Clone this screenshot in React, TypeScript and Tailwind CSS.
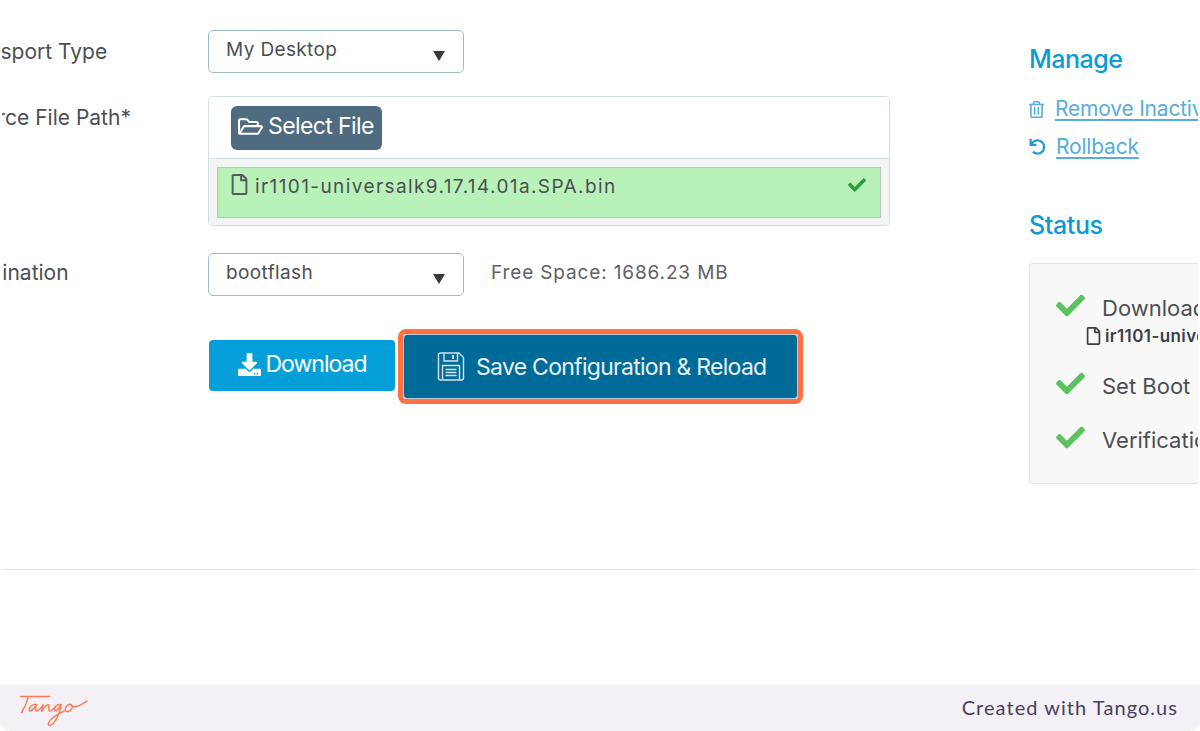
import React from "react";
import { FaRegFolderOpen, FaDownload, FaCheck, FaRegFile, FaRegTrashAlt, FaUndo } from "react-icons/fa";

function FakeSelect({ value }: { value: string }) {
  return (
    <div className="flex h-[43px] w-[256px] items-start justify-between rounded-[5px] border border-[#9dbccd] bg-white pl-[17px] pr-[18px]">
      <span className="mt-[7px] text-[19px] leading-[24px] tracking-[0.37px] text-[#4b4f54]">{value}</span>
      <span className="mt-[20px] h-0 w-0 border-x-[6.5px] border-t-[10px] border-x-transparent border-t-[#39393b]" />
    </div>
  );
}

function StatusRow({ label, className }: { label: string; className: string }) {
  return (
    <div className={`flex items-start ${className}`}>
      <FaCheck className="h-[29px] w-[29px] shrink-0 text-[#5cc15f]" />
      <span className="ml-[17px] mt-[4px] whitespace-nowrap text-[22px] leading-[26px] text-[#4b4f54]">{label}</span>
    </div>
  );
}

function SaveIcon() {
  return (
    <svg width="28" height="29" viewBox="0 0 28 29" fill="none" stroke="#d3e3ec" strokeWidth="1.4" className="mr-[11px] shrink-0">
      <path d="M1.5 3 Q1.5 1 3.5 1 H22 L26.5 5.5 V26 Q26.5 28 24.5 28 H3.5 Q1.5 28 1.5 26 Z" />
      <path d="M7 1.5 V9 H20.5 V1.5" />
      <path d="M16 3 V7" strokeWidth="2" />
      <path d="M5.5 27.5 V13.5 H22.5 V27.5" />
      <path d="M8.5 17.5 H19.5 M8.5 20.5 H19.5 M8.5 23.5 H19.5" />
    </svg>
  );
}

function TangoLogo() {
  return (
    <svg width="72" height="35" viewBox="0 0 70 34" fill="none" stroke="#ff7a50" strokeWidth="1.4" strokeLinecap="round" strokeLinejoin="round" className="mt-[8px]">
      <path d="M1.5 1.5 H30" />
      <path d="M9 2 C7.5 8 5 13 2.5 17" />
      <path d="M17 9.5 C12.5 8.5 9.5 12 10 15 C11 17 14 14 17 9.5 C15.5 13 16 16.5 18 15.5 C20 14.5 22 11.5 23.5 9.5 C23 11.5 22 14 22 16 C24 12.5 26.5 9.5 28.5 9.5 C30 9.5 28 14 29.5 15.5 C31 16.5 33 14 35 11.5" />
      <path d="M41 9.5 C37 8.5 34 12 34.5 14.5 C35.5 16.5 38.5 14 41 9.5 C40 15 38 21 35 25.5 C32.5 29.5 29 31 28.5 28.5 C28.5 25 35 20 44 15.5" />
      <path d="M50 9 C46.5 9 44.5 12.5 45 15 C46 17 50 16.5 51.5 13 C52.3 11 51.5 9.5 50 9 C51.5 11.5 55 12 60 9.5 L66 6" />
    </svg>
  );
}

export default function App() {
  return (
    <div className="flex h-[731px] w-[1200px] flex-col overflow-hidden bg-white font-['Inter',sans-serif]">
      <main className="relative mx-[2px] mt-[2px] flex h-[683px] flex-col overflow-hidden rounded-t-[8px] bg-white">
        <div className="flex h-[568px] border-b border-[#e2e4e6]">
          <section className="w-[1027px] shrink-0 pt-[28px]">
            <div className="flex">
              <div className="w-[206px] shrink-0 overflow-hidden">
                <div className="-ml-[46px] mt-[9px] whitespace-nowrap text-[21px] leading-[26px] text-[#4b4f54]">Transport Type</div>
              </div>
              <FakeSelect value="My Desktop" />
            </div>
            <div className="mt-[23px] flex">
              <div className="w-[206px] shrink-0 overflow-hidden">
                <div className="-ml-[43px] mt-[9px] whitespace-nowrap text-[21px] leading-[26px] text-[#4b4f54]">Source File Path*</div>
              </div>
              <div className="h-[130px] w-[682px] overflow-hidden rounded-[4px] border border-[#d3dfe6]">
                <div className="h-[62px] border-b border-[#d3dfe6] bg-white pl-[22px] pt-[9px]">
                  <div className="flex h-[44px] w-[151px] items-center rounded-[6px] bg-[#4f6b80] pb-[3px] pl-[7px] text-[23px] text-white">
                    <FaRegFolderOpen className="mr-[5px] h-[25px] w-[25px] shrink-0" />
                    <span className="tracking-[-0.6px]">Select File</span>
                  </div>
                </div>
                <div className="h-[67px] bg-[#f3f4f4] px-[8px] pt-[8px]">
                  <div className="flex h-[51px] items-start justify-between border border-[#bfc5bd] bg-[#b9f2b8] pl-[13px] pr-[14px] pt-[6px]">
                    <div className="flex items-start">
                      <FaRegFile className="mr-[7px] h-[21px] w-[17px] shrink-0 text-[#55595c]" />
                      <span className="mt-[1px] text-[19px] leading-[24px] tracking-[1.4px] text-[#4b4f54]">ir1101-universalk9.17.14.01a.SPA.bin</span>
                    </div>
                    <FaCheck className="mt-[2px] h-[18px] w-[18px] shrink-0 text-[#2d9e3a]" />
                  </div>
                </div>
              </div>
            </div>
            <div className="mt-[27px] flex">
              <div className="w-[206px] shrink-0 overflow-hidden">
                <div className="-ml-[45px] mt-[7px] whitespace-nowrap text-[21px] leading-[26px] text-[#4b4f54]">Destination</div>
              </div>
              <FakeSelect value="bootflash" />
              <span className="ml-[27px] mt-[7px] text-[19px] leading-[26px] tracking-[0.86px] text-[#5d6165]">Free Space: 1686.23 MB</span>
            </div>
            <div className="ml-[207px] mt-[33px] flex items-center">
              <div className="mb-[2px] flex h-[51px] w-[186px] items-center justify-center rounded-[4px] bg-[#049fd9] pb-[3px] text-[23px] text-white">
                <FaDownload className="mr-[5px] h-[23px] w-[23px] shrink-0" />
                <span className="tracking-[-1px]">Download</span>
              </div>
              <div className="ml-[3px] rounded-[8px] border-[5px] border-[#ff7043]">
                <div className="flex h-[65px] w-[395px] items-center rounded-[4px] border border-[#b9cbd6] bg-[#006b99] pl-[33px] text-[23px] text-[#e8f2f6]">
                  <SaveIcon />
                  <span className="mt-[2px] whitespace-nowrap tracking-[-0.72px]">Save Configuration &amp; Reload</span>
                </div>
              </div>
            </div>
          </section>
          <aside className="min-w-0 flex-1 overflow-hidden pt-[41px]">
            <h2 className="text-[25px] font-medium leading-[32px] tracking-[-0.5px] text-[#0a9bd8]">Manage</h2>
            <div className="mt-[21px] flex items-center whitespace-nowrap text-[#57addb]">
              <FaRegTrashAlt className="h-[17px] w-[15px] shrink-0" />
              <span className="ml-[11px] text-[21px] leading-[26px] tracking-[-0.2px] underline underline-offset-[3px]">Remove Inactive</span>
            </div>
            <div className="mt-[12px] flex items-center whitespace-nowrap text-[#57addb]">
              <FaUndo className="h-[16px] w-[17px] shrink-0 text-[#1f9bd8]" />
              <span className="ml-[10px] text-[21px] leading-[26px] tracking-[-0.2px] underline underline-offset-[3px]">Rollback</span>
            </div>
            <h2 className="mt-[49px] text-[25px] font-medium leading-[32px] tracking-[-0.4px] text-[#0a9bd8]">Status</h2>
            <div className="mt-[22px] h-[221px] w-[200px] rounded-l-[4px] border border-r-0 border-[#e3e3e3] bg-[#f8f8f8] pl-[26px] pt-[27px]">
              <StatusRow label="Download" className="" />
              <div className="ml-[30px] mt-[5px] flex items-center whitespace-nowrap">
                <FaRegFile className="h-[18px] w-[15px] shrink-0 text-[#39404a]" />
                <span className="ml-[4px] text-[17px] font-semibold leading-[20px] tracking-[0.4px] text-[#39404a]">ir1101-universalk9</span>
              </div>
              <StatusRow label="Set Boot Image" className="mt-[23px]" />
              <StatusRow label="Verification" className="mt-[24px]" />
            </div>
          </aside>
        </div>
      </main>
      <footer className="flex h-[46px] items-center justify-between rounded-b-[10px] bg-[#f3f1f6] pl-[19px] pr-[22px]">
        <TangoLogo />
        <span className="pb-[2px] font-['Lato',sans-serif] text-[20px] tracking-[1.05px] text-[#4a3f60]">Created with Tango.us</span>
      </footer>
    </div>
  );
}
